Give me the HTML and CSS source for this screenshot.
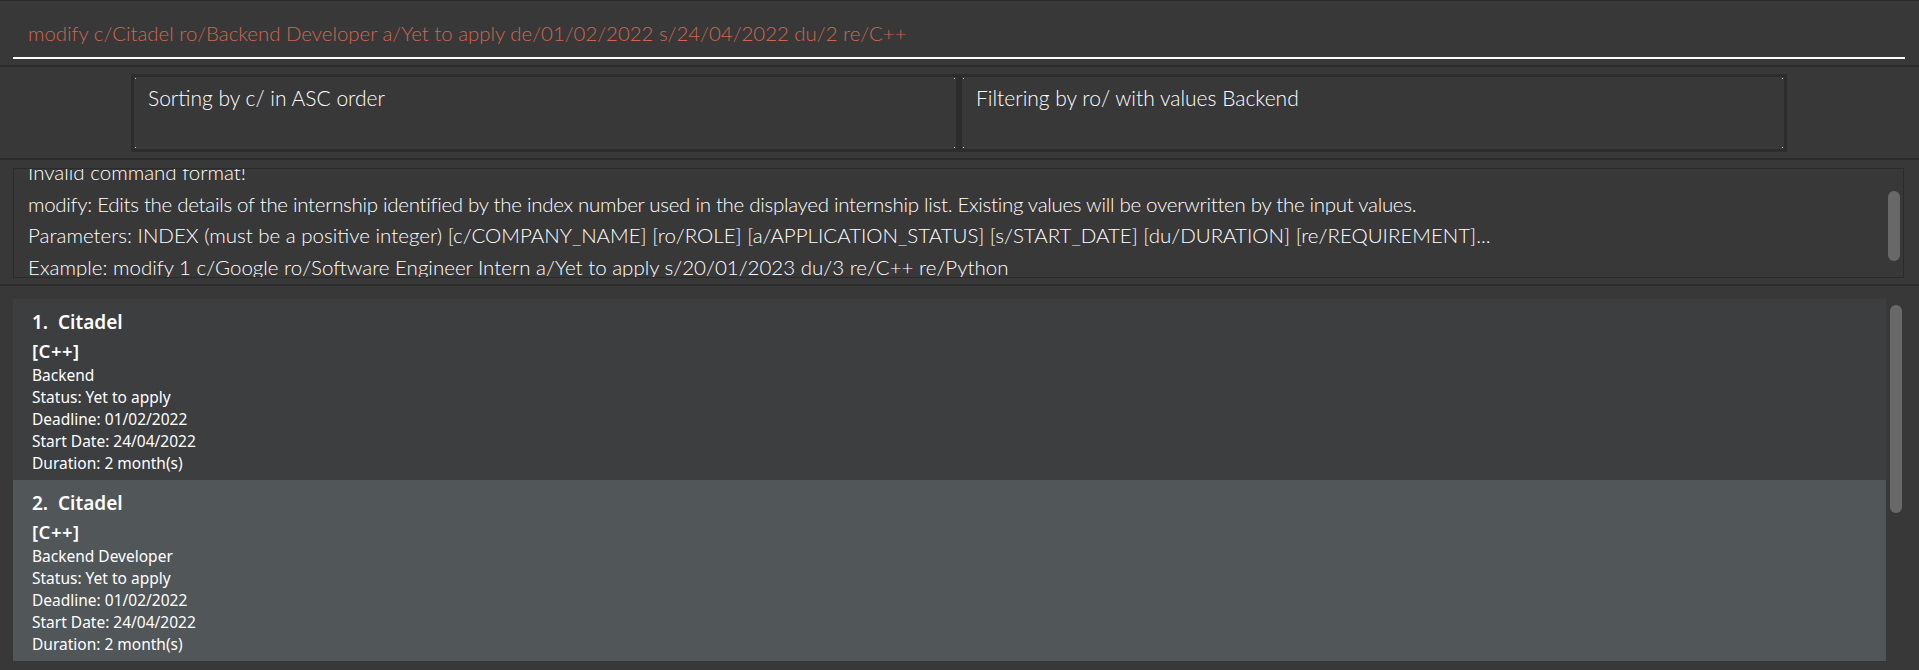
FILE: index.html
```html
<!DOCTYPE html>
<html lang="en">
<head>
<meta charset="utf-8">
<title>InternBuddy</title>
<link rel="stylesheet" href="styles.css">
</head>
<body>
<div class="app">
  <div class="command-bar">
    <div class="command-field">modify c/Citadel ro/Backend Developer a/Yet to apply de/01/02/2022 s/24/04/2022 du/2 re/C++</div>
  </div>
  <div class="status-panel">
    <div class="status-box">Sorting by c/ in ASC order</div>
    <div class="status-box">Filtering by ro/ with values Backend</div>
  </div>
  <div class="result-panel">
    <div class="result-box">
      <div class="result-viewport">
        <div class="result-text">
          <p>Invalid command format!</p>
          <p class="tight">modify: Edits the details of the internship identified by the index number used in the displayed internship list. Existing values will be overwritten by the input values.</p>
          <p>Parameters: INDEX (must be a positive integer) [c/COMPANY_NAME] [ro/ROLE] [a/APPLICATION_STATUS] [s/START_DATE] [du/DURATION] [re/REQUIREMENT]...</p>
          <p>Example: modify 1 c/Google ro/Software Engineer Intern a/Yet to apply s/20/01/2023 du/3 re/C++ re/Python</p>
        </div>
      </div>
      <div class="scroll-track result-track"><div class="scroll-thumb"></div></div>
    </div>
  </div>
  <div class="list-panel">
    <div class="list">
      <div class="card card-even">
        <div class="card-title">1.&nbsp; Citadel</div>
        <div class="card-tag">[C++]</div>
        <div class="card-line">Backend</div>
        <div class="card-line">Status: Yet to apply</div>
        <div class="card-line">Deadline: 01/02/2022</div>
        <div class="card-line">Start Date: 24/04/2022</div>
        <div class="card-line">Duration: 2 month(s)</div>
      </div>
      <div class="card card-odd">
        <div class="card-title">2.&nbsp; Citadel</div>
        <div class="card-tag">[C++]</div>
        <div class="card-line">Backend Developer</div>
        <div class="card-line">Status: Yet to apply</div>
        <div class="card-line">Deadline: 01/02/2022</div>
        <div class="card-line">Start Date: 24/04/2022</div>
        <div class="card-line">Duration: 2 month(s)</div>
      </div>
    </div>
    <div class="scroll-track list-track"><div class="scroll-thumb"></div></div>
  </div>
</div>
</body>
</html>
```
FILE: styles.css
```css
html, body {
  margin: 0;
  padding: 0;
}
body {
  background: #383838;
  color: #ffffff;
  font-family: "Noto Sans", "Open Sans", sans-serif;
}
.app {
  height: 670px;
  display: flex;
  flex-direction: column;
  overflow: hidden;
}
.command-field,
.status-box,
.result-text {
  font-family: "Lato", "Noto Sans", sans-serif;
  font-weight: 300;
}
.command-bar {
  box-sizing: border-box;
  height: 67px;
  border-top: 1px solid #2b2b2b;
  border-bottom: 2px solid #2b2b2b;
  padding: 0 14px 0 13px;
}
.command-field {
  box-sizing: border-box;
  height: 58px;
  border-bottom: 2px solid #ffffff;
  padding: 18px 0 0 15px;
  color: #d06651;
  font-size: 20.4px;
  line-height: 28px;
  white-space: nowrap;
}
.status-panel {
  box-sizing: border-box;
  height: 93px;
  border-bottom: 2px solid #2b2b2b;
  padding: 7px 132px 0 131px;
  display: flex;
}
.status-box {
  flex: 1;
  box-sizing: border-box;
  height: 78px;
  border: 3px solid #2c2c2c;
  padding: 7px 14px;
  font-size: 21px;
  line-height: 28px;
  background-image:
    linear-gradient(#bdbdbd, #bdbdbd),
    linear-gradient(#bdbdbd, #bdbdbd),
    linear-gradient(#bdbdbd, #bdbdbd),
    linear-gradient(#bdbdbd, #bdbdbd);
  background-size: 1px 1px;
  background-repeat: no-repeat;
  background-position: left 1px top 1px, right 1px top 1px, left 1px bottom 1px, right 1px bottom 1px;
}
.result-panel {
  box-sizing: border-box;
  height: 126px;
  border-bottom: 2px solid #2b2b2b;
  padding: 8px 15px 6px 13px;
}
.result-box {
  box-sizing: border-box;
  height: 110px;
  border: 1px solid #2b2b2b;
  display: flex;
}
.result-viewport {
  flex: 1;
  overflow: hidden;
  padding-left: 14px;
}
.result-text {
  margin-top: -12px;
  font-size: 20.5px;
  line-height: 31.5px;
  white-space: nowrap;
}
.result-text p {
  margin: 0;
}
.result-text .tight {
  letter-spacing: -0.3px;
}
.scroll-track {
  width: 12px;
  flex: none;
}
.scroll-thumb {
  background: #686868;
  border-radius: 6px;
}
.result-track {
  margin-right: 3px;
}
.result-track .scroll-thumb {
  margin-top: 22px;
  height: 70px;
}
.list-panel {
  flex: 1;
  display: flex;
  padding: 13px 17px 0 13px;
}
.list {
  flex: 1;
  display: flex;
  flex-direction: column;
}
.list-track {
  margin-left: 4px;
}
.list-track .scroll-thumb {
  margin-top: 6px;
  height: 208px;
}
.card {
  height: 181px;
  box-sizing: border-box;
  padding: 9px 0 0 19px;
  flex: none;
}
.card-even {
  background: #3c3e3f;
}
.card-odd {
  background: #515658;
}
.card-title {
  font-weight: 600;
  font-size: 19px;
  line-height: 28px;
}
.card-tag {
  font-weight: 600;
  font-size: 18.5px;
  line-height: 26px;
  margin-top: 2px;
  letter-spacing: 0.5px;
}
.card-line {
  font-size: 15.5px;
  line-height: 22px;
}
```
